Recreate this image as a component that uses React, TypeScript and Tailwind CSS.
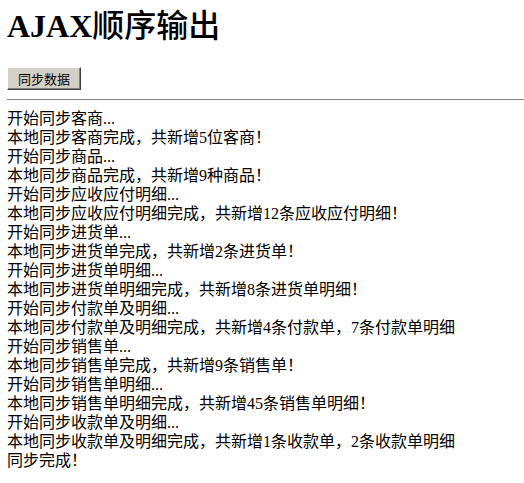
import * as React from 'react';

const lines: string[] = [
	'开始同步客商...',
	'本地同步客商完成，共新增5位客商！',
	'开始同步商品...',
	'本地同步商品完成，共新增9种商品！',
	'开始同步应收应付明细...',
	'本地同步应收应付明细完成，共新增12条应收应付明细！',
	'开始同步进货单...',
	'本地同步进货单完成，共新增2条进货单！',
	'开始同步进货单明细...',
	'本地同步进货单明细完成，共新增8条进货单明细！',
	'开始同步付款单及明细...',
	'本地同步付款单及明细完成，共新增4条付款单，7条付款单明细',
	'开始同步销售单...',
	'本地同步销售单完成，共新增9条销售单！',
	'开始同步销售单明细...',
	'本地同步销售单明细完成，共新增45条销售单明细！',
	'开始同步收款单及明细...',
	'本地同步收款单及明细完成，共新增1条收款单，2条收款单明细',
	'同步完成！',
];

export default function App() {
	return (
		<div className="min-h-[483px] bg-white text-black font-['Liberation_Serif','Noto_Sans_CJK_SC',serif]">
			<div className="pl-[7px] pt-[8px]">
				<h1 className="text-[32px] leading-[37px] font-bold">
					AJAX<span className="font-medium">顺序输出</span>
				</h1>
				<button className="mt-[22px] h-[23px] w-[74px] bg-[#d4d0c8] border border-t-white border-l-white border-r-[#404040] border-b-[#404040] shadow-[inset_-1px_-1px_0_#808080] text-[13px] leading-none font-['Noto_Sans_CJK_SC',sans-serif]">
					同步数据
				</button>
				<div className="mt-[8px] h-[2px] border-t border-[#808080] border-b-white" />
				<div className="mt-[8px] flex flex-col text-[16px] leading-[19px]">
					{lines.map((l, i) => (
						<div key={i} className="h-[19px] shrink-0 whitespace-nowrap">
							{l}
						</div>
					))}
				</div>
			</div>
		</div>
	);
}
